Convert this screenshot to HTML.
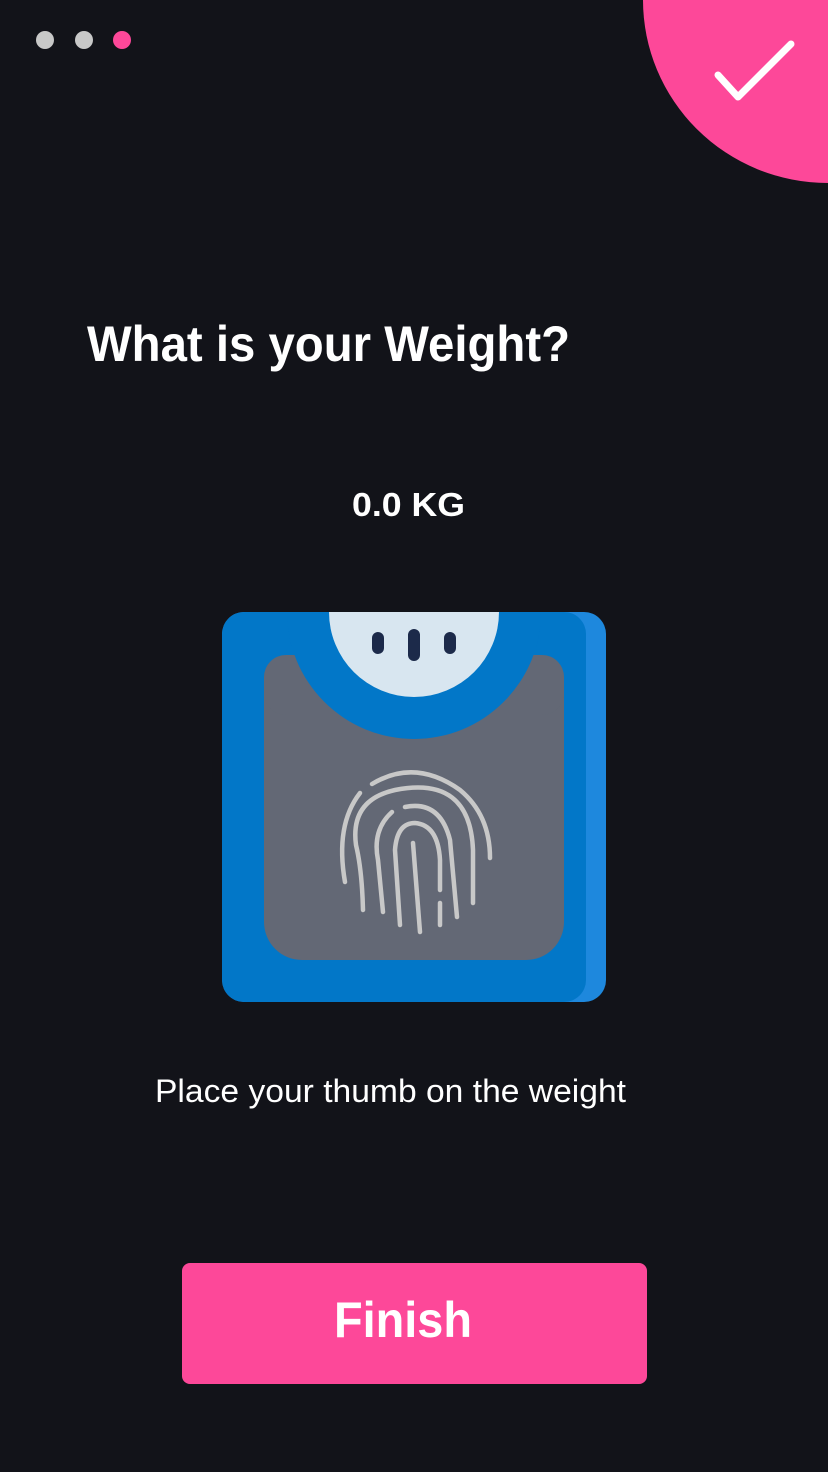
<!DOCTYPE html>
<html><head><meta charset="utf-8"><style>
html,body{margin:0;padding:0;background:#121319;width:828px;height:1472px;overflow:hidden}
svg{display:block}
</style></head><body>
<svg width="828" height="1472" viewBox="0 0 828 1472" xmlns="http://www.w3.org/2000/svg" font-family="'Liberation Sans', sans-serif">
<rect width="828" height="1472" fill="#121319"/>
<circle cx="45" cy="40" r="9" fill="#c8c8c8"/>
<circle cx="84" cy="40" r="9" fill="#c8c8c8"/>
<circle cx="122" cy="40" r="9" fill="#fd4899"/>
<ellipse cx="828" cy="0" rx="185" ry="183" fill="#fd4899"/>
<path d="M718 75 L738 97 L791 44" fill="none" stroke="#fff" stroke-width="7" stroke-linecap="round" stroke-linejoin="round"/>
<text x="87" y="361" font-size="50" font-weight="bold" fill="#fff" textLength="483" lengthAdjust="spacingAndGlyphs">What is your Weight?</text>
<text x="352" y="516" font-size="33" font-weight="bold" fill="#fff" textLength="113" lengthAdjust="spacingAndGlyphs">0.0 KG</text>
<defs><clipPath id="c"><rect x="222" y="612" width="384" height="390" rx="22"/></clipPath></defs>
<g clip-path="url(#c)">
<rect x="222" y="612" width="384" height="390" fill="#1e88dd"/>
<rect x="222" y="612" width="364" height="390" rx="22" fill="#0277c8"/>
<rect x="264" y="655" width="300" height="305" rx="38" fill="#636875"/>
<rect x="264" y="655" width="300" height="60" rx="22" fill="#636875"/>
<circle cx="414" cy="612" r="127" fill="#0277c8"/>
<circle cx="414" cy="612" r="85" fill="#d8e6f0"/>
</g>
<g stroke="#1c2a4a" stroke-linecap="round" stroke-width="12">
<line x1="378" y1="638" x2="378" y2="648"/>
<line x1="414" y1="635" x2="414" y2="655"/>
<line x1="450" y1="638" x2="450" y2="648"/>
</g>
<g fill="none" stroke="#c8c8c8" stroke-width="4.5" stroke-linecap="round">
<path d="M372 784 Q415 758 460 790 Q490 815 490 858"/>
<path d="M360 793 Q335 825 345 882"/>
<path d="M363 910 Q362 870 356 845 Q350 800 395 790 Q470 775 473 850 L473 903"/>
<path d="M383 912 L378 860 Q372 830 392 812"/>
<path d="M405 807 Q440 800 450 840 L457 917"/>
<path d="M400 925 L395 850 Q397 823 415 823 Q438 825 440 860 L440 890"/>
<path d="M440 903 L440 925"/>
<path d="M413 843 L420 932"/>
</g>
<text x="155" y="1102" font-size="32" fill="#fff" textLength="471" lengthAdjust="spacingAndGlyphs">Place your thumb on the weight</text>
<rect x="182" y="1263" width="465" height="121" rx="8" fill="#fd4899"/>
<text x="334" y="1337" font-size="50" font-weight="bold" fill="#fff" textLength="138" lengthAdjust="spacingAndGlyphs">Finish</text>
</svg>
</body></html>
